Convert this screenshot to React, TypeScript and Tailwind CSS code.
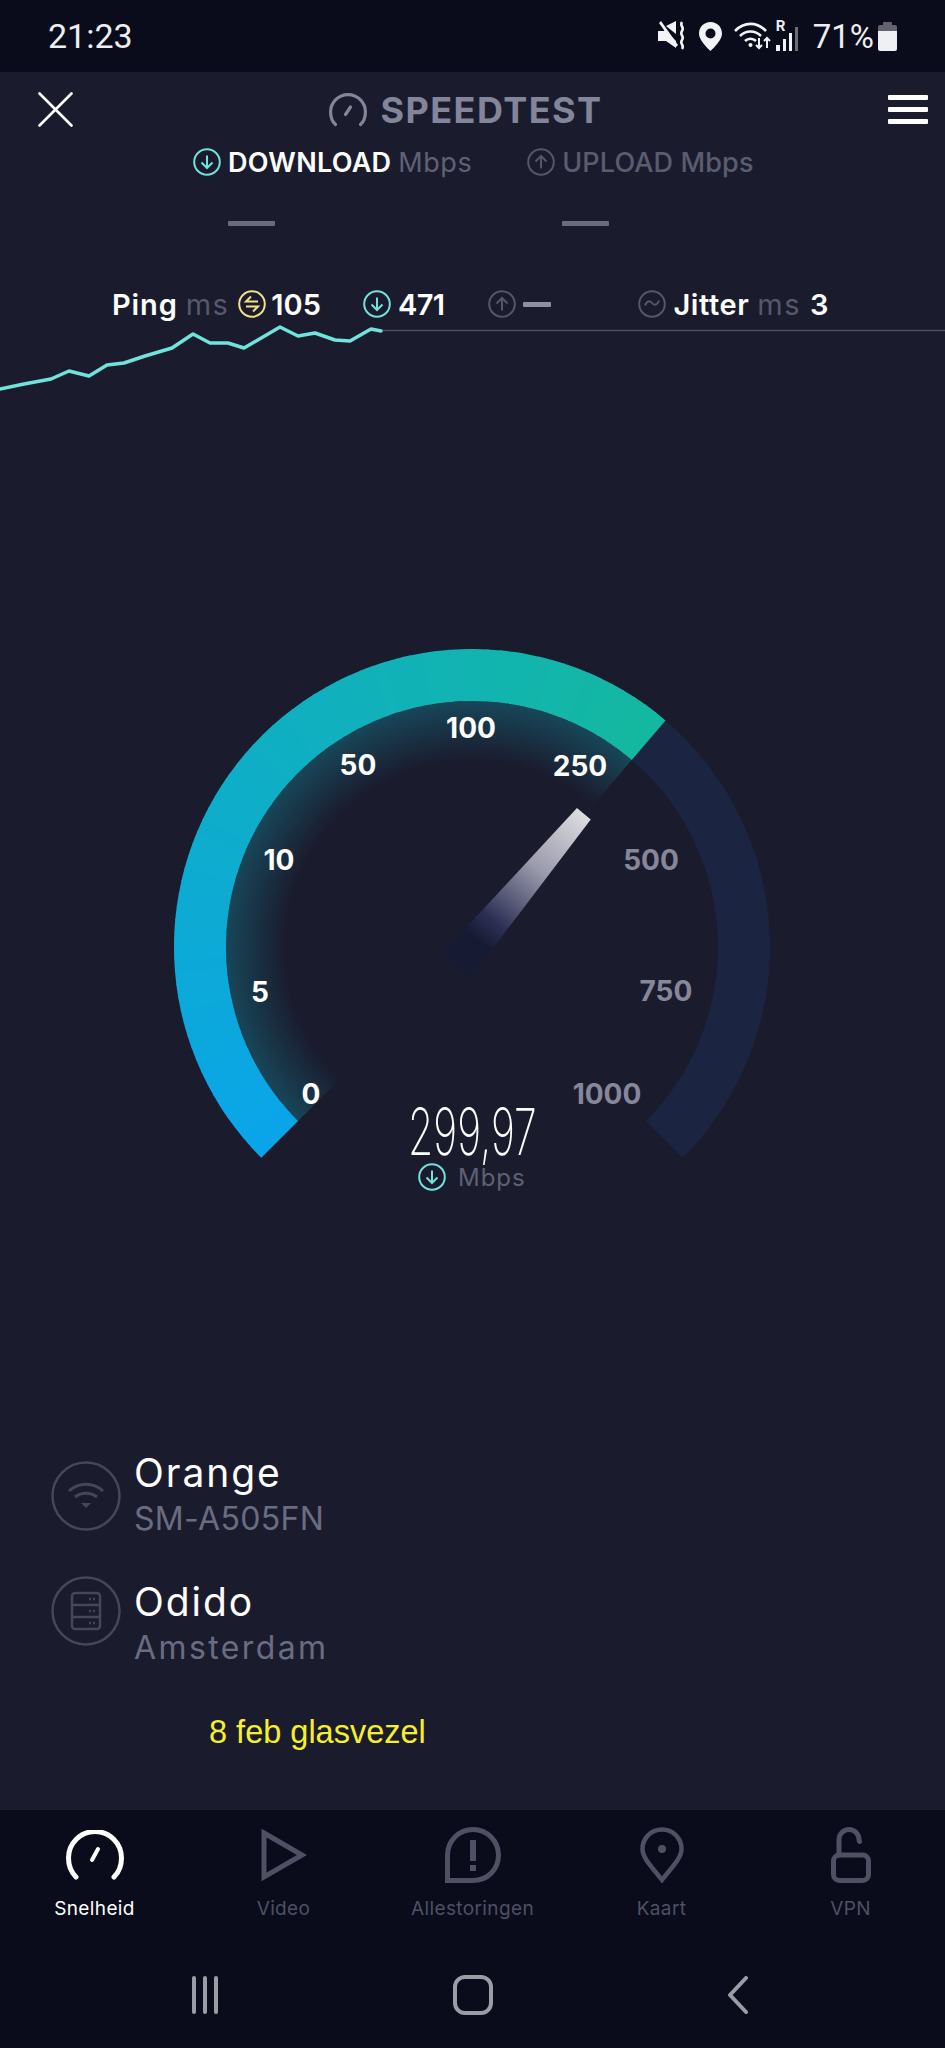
import type { ReactNode } from "react"

const CX = 472
const CY = 307
const START = -135
const VALUE_END = 40.5
const END = 135

const polar = (r: number, deg: number) => {
  const a = (deg * Math.PI) / 180
  return [CX + r * Math.sin(a), CY - r * Math.cos(a)]
}

const sector = (r0: number, r1: number, a0: number, a1: number) => {
  const [x0, y0] = polar(r1, a0)
  const [x1, y1] = polar(r1, a1)
  const [x2, y2] = polar(r0, a1)
  const [x3, y3] = polar(r0, a0)
  const large = a1 - a0 > 180 ? 1 : 0
  return `M${x0} ${y0}A${r1} ${r1} 0 ${large} 1 ${x1} ${y1}L${x2} ${y2}A${r0} ${r0} 0 ${large} 0 ${x3} ${y3}Z`
}

// blue at zero, teal at the current value
const arcColor = (t: number) => {
  const from = [10, 165, 233]
  const to = [20, 184, 160]
  const c = from.map((v, i) => Math.round(v + (to[i] - v) * t))
  return `rgb(${c[0]},${c[1]},${c[2]})`
}

const STEPS = 70
const segments = Array.from({ length: STEPS }, (_, i) => {
  const step = (VALUE_END - START) / STEPS
  const a0 = START + i * step
  const a1 = i === STEPS - 1 ? VALUE_END : a0 + step + 0.3
  return { d: sector(246, 298, a0, a1), fill: arcColor(i / (STEPS - 1)) }
})

const ticks = [
  { label: "0", x: 311, y: 1094, on: true },
  { label: "5", x: 260, y: 992, on: true },
  { label: "10", x: 279, y: 860, on: true },
  { label: "50", x: 358, y: 765, on: true },
  { label: "100", x: 471, y: 728, on: true },
  { label: "250", x: 580, y: 766, on: true },
  { label: "500", x: 651, y: 860, on: false },
  { label: "750", x: 666, y: 991, on: false },
  { label: "1000", x: 607, y: 1094, on: false },
]

const chartPoints =
  "0,389 24,384 51,379 69,371 89,376 107,365 124,363 145,356 172,348 193,334 210,343 228,343 244,348 280,327 298,336 315,333 335,340 350,341 371,329 381,331"

function Ring({ size = 28, color, children }: { size?: number; color: string; children: ReactNode }) {
  return (
    <svg width={size} height={size} viewBox="0 0 28 28" fill="none" stroke={color} strokeWidth="2" className="shrink-0">
      <circle cx="14" cy="14" r="12.8" />
      {children}
    </svg>
  )
}

const ArrowDown = () => <path d="M14 7.5v12.5M8.5 14.5l5.5 5.5 5.5-5.5" />
const ArrowUp = () => <path d="M14 20.5V8M8.5 13.5L14 8l5.5 5.5" />

function StatusBar() {
  return (
    <div className="flex h-[72px] shrink-0 items-center justify-between bg-[#0a0c1c] pl-[48px] pr-[48px] text-[#eceef2]">
      <span className="font-['Roboto',sans-serif] text-[34px] leading-none">21:23</span>
      <div className="flex items-center">
        {/* muted + vibrate */}
        <svg width="31" height="30" viewBox="0 0 29 30" fill="#f2f3f6">
          <path d="M0 10h6l1-1 11 11v7L8 20H0z" />
          <path d="M8 5l10-5v13zM1 2l2-2 17 24-2 2z" />
          <path d="M24 1c-3 4 3 5 0 9s3 5 0 9 3 5 0 9" fill="none" stroke="#f2f3f6" strokeWidth="2.6" />
        </svg>
        <svg width="23" height="29" viewBox="0 0 23 29" className="ml-[11px]">
          <path fillRule="evenodd" fill="#f2f3f6" d="M11.500 0C5 0 0 5 0 11.500 0 19 11.500 29 11.500 29S23 19 23 11.500C23 5 18 0 11.500 0zm0 6.500a5 5 0 110 10 5 5 0 010-10z" />
        </svg>
        {/* wifi with traffic arrows */}
        <svg width="37" height="28" viewBox="0 0 37 28" fill="none" stroke="#f2f3f6" strokeWidth="2.600" className="ml-[12px]">
          <path d="M1 9c9-9.500 22-9.500 31 0M6 14c6-6 15-6 21 0M11 19c3-3 8-3 11 0" />
          <circle cx="16.500" cy="23" r="2" fill="#f2f3f6" stroke="none" />
          <path d="M25 16v10M22 23l3 3 3-3M33 26V16M30 19l3-3 3 3" strokeWidth="2" />
        </svg>
        {/* roaming signal bars */}
        <div className="relative ml-[5px] h-[30px] w-[27px]">
          <span className="absolute left-0 top-[-2px] font-['Roboto',sans-serif] text-[15px] font-bold leading-none">R</span>
          <div className="absolute bottom-0 left-0 flex h-[22px] items-end gap-[3px]">
            <span className="h-[6px] w-[4px] bg-[#f2f3f6]" />
            <span className="h-[12px] w-[3px] bg-[#f2f3f6]" />
            <span className="h-[18px] w-[3px] bg-[#f2f3f6]" />
            <span className="h-[24px] w-[3px] bg-[#6b6d78]" />
          </div>
        </div>
        <span className="ml-[10px] font-['Roboto',sans-serif] text-[33px] leading-none">71%</span>
        <div className="ml-[4px] flex w-[19px] flex-col items-center">
          <span className="h-[3px] w-[9px] rounded-t-[1px] bg-[#62636f]" />
          <span className="h-[6px] w-[19px] rounded-t-[2px] bg-[#62636f]" />
          <span className="h-[20px] w-[19px] rounded-b-[2px] bg-[#eef0f4]" />
        </div>
      </div>
    </div>
  )
}

function Header() {
  return (
    <div className="flex h-[75px] shrink-0 items-center justify-between pl-[38px] pr-[17px]">
      <svg width="35" height="35" viewBox="0 0 35 35" stroke="#fff" strokeWidth="2.600" strokeLinecap="round">
        <path d="M1.500 1.500l32 32M33.500 1.500l-32 32" />
      </svg>
      <div className="ml-[-30px] flex items-center gap-[14px]">
        <svg width="38" height="34" viewBox="0 0 38 34" fill="none" stroke="#83859a" strokeWidth="3.200" strokeLinecap="round">
          <path d="M6.500 31.500C2 27.500 1.600 22.500 1.600 19a17.400 17.400 0 0134.800 0c0 3.500-.4 8.500-4.900 12.500" />
          <path d="M16.500 21.500l5-7.500" />
        </svg>
        <span className="text-[36px] font-bold leading-none tracking-[0.04em] text-[#83859a]">SPEEDTEST</span>
      </div>
      <div className="flex w-[40px] flex-col gap-[7px]">
        <span className="h-[5px] rounded-[1px] bg-white" />
        <span className="h-[5px] rounded-[1px] bg-white" />
        <span className="h-[5px] rounded-[1px] bg-white" />
      </div>
    </div>
  )
}

function Tabs() {
  return (
    <div className="flex h-[30px] shrink-0 items-center pl-[193px] text-[27px] leading-none">
      <Ring color="#6fe3dc">
        <ArrowDown />
      </Ring>
      <span className="ml-[7px] font-semibold tracking-[0.01em] text-white">DOWNLOAD</span>
      <span className="ml-[7px] tracking-[0.02em] text-[#5f6175]">Mbps</span>
      <div className="ml-[55px] flex items-center text-[#5a5c70]">
        <Ring color="#54566a">
          <ArrowUp />
        </Ring>
        <span className="ml-[7px] font-medium tracking-[0.005em]">UPLOAD Mbps</span>
      </div>
    </div>
  )
}

function ResultDashes() {
  return (
    <div className="mt-[44px] flex h-[5px] shrink-0 gap-[287px] pl-[228px]">
      <span className="h-[5px] w-[47px] rounded-[1px] bg-[#696b7e]" />
      <span className="h-[5px] w-[47px] rounded-[1px] bg-[#696b7e]" />
    </div>
  )
}

function StatsRow() {
  return (
    <div className="mt-[63px] flex h-[30px] shrink-0 items-center pl-[112px] text-[29px] font-semibold leading-none text-white">
      <span className="tracking-[0.03em]">Ping</span>
      <span className="ml-[8px] font-normal tracking-[0.05em] text-[#56586c]">ms</span>
      <span className="ml-[9px]">
        <Ring color="#f1e08c">
          <path d="M20 11.500H8l5-5M8 16.500h12l-5 5" />
        </Ring>
      </span>
      <span className="ml-[5px]">105</span>
      <span className="ml-[42px]">
        <Ring color="#6fe3dc">
          <ArrowDown />
        </Ring>
      </span>
      <span className="ml-[7px] tracking-[-0.02em]">471</span>
      <span className="ml-[44px]">
        <Ring color="#54566a">
          <ArrowUp />
        </Ring>
      </span>
      <span className="ml-[7px] h-[5px] w-[28px] rounded-[1px] bg-[#8d8fa2]" />
      <span className="ml-[87px]">
        <Ring color="#54566a">
          <path d="M7 15.500c2-5 5-5 7-2.500s5 2.500 7-2.500" />
        </Ring>
      </span>
      <span className="ml-[7px] tracking-[0.02em]">Jitter</span>
      <span className="ml-[8px] font-normal tracking-[0.05em] text-[#56586c]">ms</span>
      <span className="ml-[9px]">3</span>
    </div>
  )
}

function LiveChart() {
  return (
    <svg width="945" height="80" viewBox="0 320 945 80" fill="none" className="mt-[1px] shrink-0">
      <path d="M381 330.500H945" stroke="#4b4d60" strokeWidth="1.500" />
      <polyline points={chartPoints} stroke="#6fe3dc" strokeWidth="3.500" strokeLinejoin="round" strokeLinecap="round" />
    </svg>
  )
}

function Gauge() {
  return (
    <svg width="945" height="560" viewBox="0 640 945 560" className="mt-[240px] shrink-0">
      <defs>
        <radialGradient id="gaugeGlow" gradientUnits="userSpaceOnUse" cx={CX} cy={CY} r="246">
          <stop offset="0.76" stopColor="#12a0b4" stopOpacity="0" />
          <stop offset="1" stopColor="#12a0b4" stopOpacity="0.32" />
        </radialGradient>
        <linearGradient id="needleFill" gradientUnits="userSpaceOnUse" x1="0" y1="773" x2="0" y2="979">
          <stop offset="0" stopColor="#dcdce0" />
          <stop offset="0.35" stopColor="#9a9aac" />
          <stop offset="0.68" stopColor="#2c2f54" />
          <stop offset="0.8" stopColor="#161b33" />
          <stop offset="0.92" stopColor="#161b33" />
          <stop offset="1" stopColor="#161b33" stopOpacity="0" />
        </linearGradient>
      </defs>
      <g transform="translate(0 640)">
        <path d={sector(246, 298, VALUE_END, END)} fill="#1b2440" />
        <path d={sector(170, 246, START, VALUE_END)} fill="url(#gaugeGlow)" />
        {segments.map((s, i) => (
          <path key={i} d={s.d} fill={s.fill} />
        ))}
      </g>
      {/* needle at about 300 Mbps */}
      <polygon
        points="463,773 481,773 491,979 453,979"
        fill="url(#needleFill)"
        transform="rotate(40 472 947)"
      />
      {ticks.map((t) => (
        <text
          key={t.label}
          x={t.x}
          y={t.y + 10}
          textAnchor="middle"
          className={`text-[28px] font-bold ${t.on ? "fill-white" : "fill-[#86879a]"}`}
        >
          {t.label}
        </text>
      ))}
      <text transform="translate(408 1155) scale(0.63 1)" className="fill-white text-[65px] font-extralight">
        299,97
      </text>
      <g transform="translate(418 1163)">
        <circle cx="14" cy="14" r="12.800" fill="none" stroke="#6fe3dc" strokeWidth="2" />
        <path d="M14 7.500v12.500M8.500 14.500l5.500 5.500 5.500-5.500" fill="none" stroke="#6fe3dc" strokeWidth="2" />
      </g>
      <text x="458" y="1186" className="fill-[#5e6074] text-[24px] tracking-[0.04em]">
        Mbps
      </text>
    </svg>
  )
}

function InfoRow({
  icon,
  title,
  sub,
  subClass,
  iconClass,
}: {
  icon: ReactNode
  title: string
  sub: string
  subClass: string
  iconClass: string
}) {
  return (
    <div className="flex h-[92px] items-start pl-[51px]">
      <svg width="70" height="70" viewBox="0 0 70 70" fill="none" stroke="#44465a" strokeWidth="2.500" className={`shrink-0 ${iconClass}`}>
        <circle cx="35" cy="35" r="33.500" />
        {icon}
      </svg>
      <div className="ml-[13px] flex flex-col">
        <span className="text-[39px] leading-[46px] tracking-[0.05em] text-white">{title}</span>
        <span className={`text-[32px] leading-[46px] text-[#6a6c82] ${subClass}`}>{sub}</span>
      </div>
    </div>
  )
}

function NavIcon({ label, active, children }: { label: string; active?: boolean; children: ReactNode }) {
  return (
    <div className={`flex w-[189px] flex-col items-center ${active ? "text-white" : "text-[#4e5064]"}`}>
      <div className="flex h-[58px] items-center justify-center">{children}</div>
      <span className="mt-[14px] text-[19px] leading-[22px] tracking-[0.02em]">{label}</span>
    </div>
  )
}

function BottomNav() {
  return (
    <div className="flex h-[238px] shrink-0 flex-col bg-[#0a0c1c]">
      <div className="flex pl-0 pt-[16px]">
        <NavIcon label="Snelheid" active>
          <svg width="58" height="50" viewBox="0 0 58 50" fill="none" stroke="#fff" strokeWidth="5" strokeLinecap="round">
            <path d="M10 47C4 41 2.500 34 2.500 28a26.500 26.500 0 0153 0c0 6-1.500 13-7.500 19" />
            <path d="M26 30l6-11" strokeWidth="4" />
          </svg>
        </NavIcon>
        <NavIcon label="Video">
          <svg width="46" height="56" viewBox="0 0 46 56" fill="none" stroke="#4e5064" strokeWidth="5">
            <path d="M3 6l38 22L3 50z" />
          </svg>
        </NavIcon>
        <NavIcon label="Allestoringen">
          <svg width="56" height="56" viewBox="0 0 56 56" fill="none" stroke="#4e5064" strokeWidth="5">
            <path d="M2.500 53.500V28a25.500 25.500 0 1151 0c0 15-11.500 25.500-25.500 25.500z" />
            <path d="M28 13v21M28 38v6" strokeWidth="6" />
          </svg>
        </NavIcon>
        <NavIcon label="Kaart">
          <svg width="44" height="56" viewBox="0 0 44 56" fill="none" stroke="#4e5064" strokeWidth="4.500">
            <path d="M22 53C12 40 2.500 31 2.500 22a19.500 19.500 0 0139 0c0 9-9.500 18-19.500 31z" />
            <circle cx="22" cy="22" r="4" fill="#4e5064" stroke="none" />
          </svg>
        </NavIcon>
        <NavIcon label="VPN">
          <svg width="40" height="56" viewBox="0 0 40 56" fill="none" stroke="#4e5064" strokeWidth="5">
            <rect x="2.500" y="28" width="35" height="25.500" rx="6" />
            <path d="M8 28V12.500a10 10 0 0120 0c0 1 .5 2 .5 2" strokeLinecap="round" />
          </svg>
        </NavIcon>
      </div>
      <div className="mt-[56px] flex justify-between pl-[192px] pr-[196px]">
        <div className="flex h-[38px] gap-[7px]">
          <span className="h-[38px] w-[4px] rounded-full bg-[#9a9ca6]" />
          <span className="h-[38px] w-[4px] rounded-full bg-[#9a9ca6]" />
          <span className="h-[38px] w-[4px] rounded-full bg-[#9a9ca6]" />
        </div>
        <span className="mt-[-1px] h-[40px] w-[40px] rounded-[12px] border-[4px] border-[#9a9ca6]" />
        <svg width="22" height="38" viewBox="0 0 22 38" fill="none" stroke="#9a9ca6" strokeWidth="4" strokeLinecap="round" strokeLinejoin="round">
          <path d="M19 2L3 19l16 17" />
        </svg>
      </div>
    </div>
  )
}

export default function App() {
  return (
    <div className="flex h-[2048px] w-[945px] flex-col overflow-hidden bg-[#1a1c2e] font-['Inter',sans-serif]">
      <StatusBar />
      <Header />
      <Tabs />
      <ResultDashes />
      <StatsRow />
      <LiveChart />
      <Gauge />
      <div className="mt-[250px] flex flex-col gap-[37px]">
        <InfoRow
          title="Orange"
          sub="SM-A505FN"
          subClass="tracking-[0.01em]"
          iconClass="mt-[11px]"
          icon={
            <g stroke="#44465a" strokeWidth="3">
              <path d="M18 30c10-9 24-9 34 0M24 36c6.500-5 15.500-5 22 0" />
              <path d="M30 42h10l-5 5z" fill="#44465a" strokeWidth="0" />
            </g>
          }
        />
        <InfoRow
          title="Odido"
          sub="Amsterdam"
          subClass="tracking-[0.075em]"
          iconClass="mt-[-3px]"
          icon={
            <g strokeWidth="2.500">
              <rect x="21" y="17" width="28" height="36" rx="3" />
              <path d="M21 29h28M21 41h28" />
              <path d="M38 23h6M38 35h6M38 47h6" strokeDasharray="2 2" />
            </g>
          }
        />
      </div>
      <div className="mt-[43px] pl-[209px] font-['Liberation_Sans',sans-serif] text-[32.5px] leading-[36px] text-[#f5f02a]">
        8 feb glasvezel
      </div>
      <div className="flex-1" />
      <BottomNav />
    </div>
  )
}
